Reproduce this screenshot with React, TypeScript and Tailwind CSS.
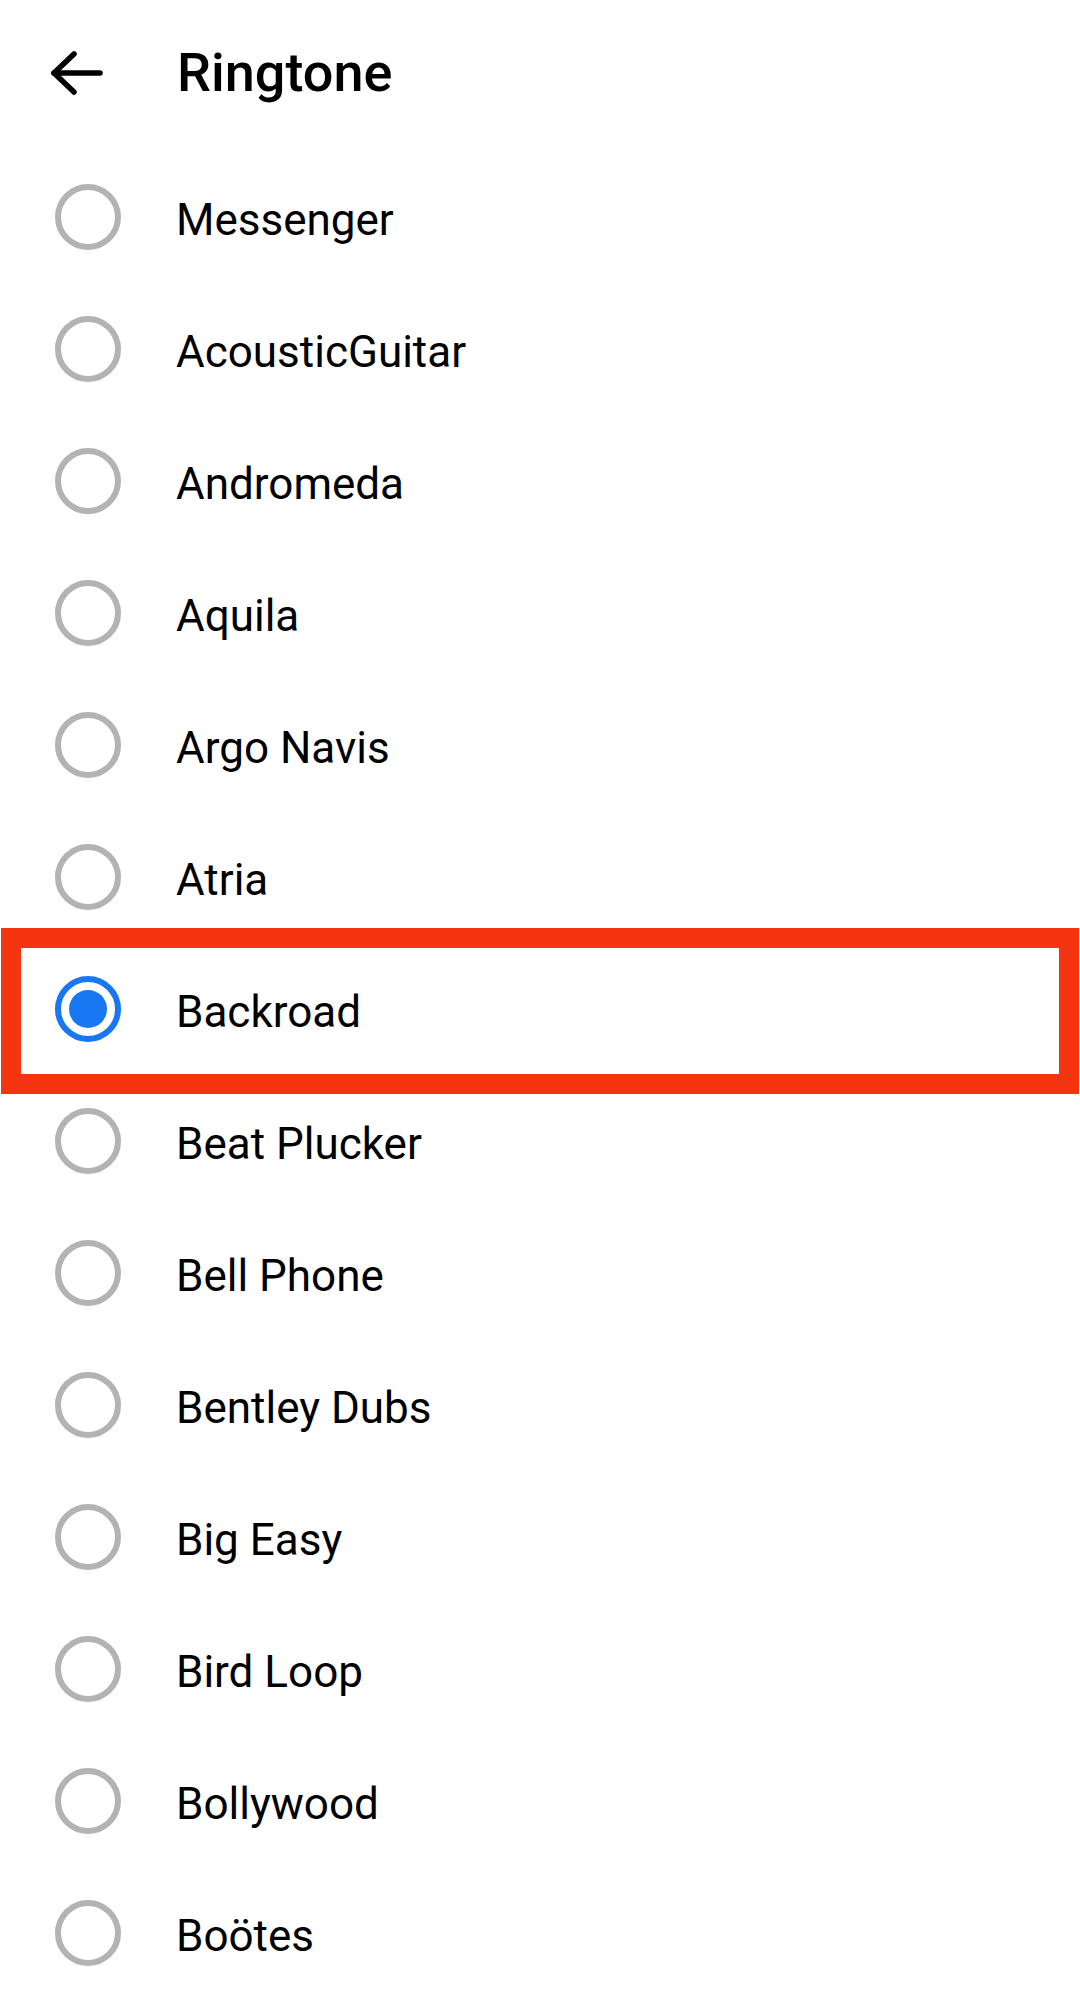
import React from "react";

const tones = [
  "Messenger",
  "AcousticGuitar",
  "Andromeda",
  "Aquila",
  "Argo Navis",
  "Atria",
  "Backroad",
  "Beat Plucker",
  "Bell Phone",
  "Bentley Dubs",
  "Big Easy",
  "Bird Loop",
  "Bollywood",
  "Boötes",
];

function Radio({ checked }: { checked: boolean }) {
  if (checked) {
    return (
      <div className="w-[66px] h-[66px] rounded-full border-[6px] border-[#1877f2] flex items-center justify-center">
        <div className="w-[38px] h-[38px] rounded-full bg-[#1877f2]" />
      </div>
    );
  }
  return <div className="w-[66px] h-[66px] rounded-full border-[6px] border-[#b3b3b3]" />;
}

export default function App() {
  const selected = "Backroad";
  return (
    <div className="w-[1080px] h-[2008px] bg-white overflow-hidden text-black font-['Roboto',sans-serif]">
      {/* header */}
      <div className="h-[146px] flex items-center">
        <div className="w-[177px] pl-[50px]">
          <svg width="54" height="46" viewBox="0 0 54 46" fill="none" stroke="#000" strokeWidth="5.5" strokeLinecap="round" strokeLinejoin="round">
            <path d="M4 23H50" />
            <path d="M24 4L4 23L24 42" />
          </svg>
        </div>
        <h1 className="text-[54px] font-medium leading-none">Ringtone</h1>
      </div>

      <div className="mt-[5px] flex flex-col">
        {tones.map((t) => (
          <div key={t} className="relative h-[132px] flex items-center">
            <div className="w-[176px] pl-[55px]">
              <Radio checked={t === selected} />
            </div>
            <span className="text-[44px] leading-none mt-[6px]">{t}</span>
            {t === selected && (
              <div className="absolute left-[1px] right-[1px] -top-[15px] -bottom-[19px] border-[20px] border-[#f4350f]" />
            )}
          </div>
        ))}
      </div>
    </div>
  );
}
